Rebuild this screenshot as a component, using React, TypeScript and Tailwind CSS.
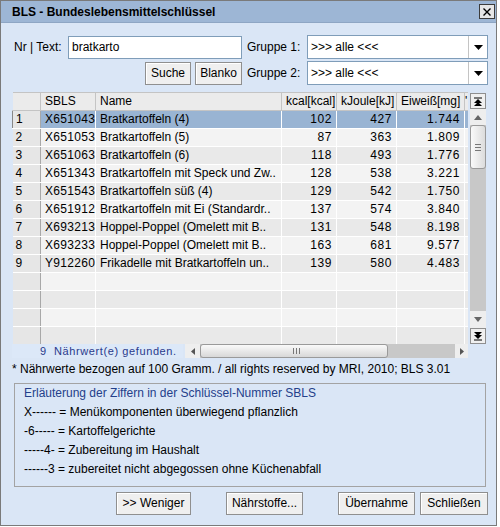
import React from "react";

type Row = {
  nr: number;
  sbls: string;
  name: string;
  kcal: string;
  kj: string;
  eiweiss: string;
};

const rows: Row[] = [
  { nr: 1, sbls: "X651043", name: "Bratkartoffeln (4)", kcal: "102", kj: "427", eiweiss: "1.744" },
  { nr: 2, sbls: "X651053", name: "Bratkartoffeln (5)", kcal: "87", kj: "363", eiweiss: "1.809" },
  { nr: 3, sbls: "X651063", name: "Bratkartoffeln (6)", kcal: "118", kj: "493", eiweiss: "1.776" },
  { nr: 4, sbls: "X651343", name: "Bratkartoffeln mit Speck und Zw..", kcal: "128", kj: "538", eiweiss: "3.221" },
  { nr: 5, sbls: "X651543", name: "Bratkartoffeln süß (4)", kcal: "129", kj: "542", eiweiss: "1.750" },
  { nr: 6, sbls: "X651912", name: "Bratkartoffeln mit Ei (Standardr..", kcal: "137", kj: "574", eiweiss: "3.840" },
  { nr: 7, sbls: "X693213", name: "Hoppel-Poppel (Omelett mit B..", kcal: "131", kj: "548", eiweiss: "8.198" },
  { nr: 8, sbls: "X693233", name: "Hoppel-Poppel (Omelett mit B..", kcal: "163", kj: "681", eiweiss: "9.577" },
  { nr: 9, sbls: "Y912260", name: "Frikadelle mit Bratkartoffeln un..", kcal: "139", kj: "580", eiweiss: "4.483" },
];

const legend = [
  "X------ = Menükomponenten überwiegend pflanzlich",
  "-6----- = Kartoffelgerichte",
  "-----4- = Zubereitung im Haushalt",
  "------3 = zubereitet nicht abgegossen ohne Küchenabfall",
];

function Button({ label, className }: { label: string; className: string }) {
  return (
    <button
      className={`h-[23px] border border-[#8f8f8f] bg-[#efefef] text-[12px] leading-[21px] text-black shadow-[inset_1px_1px_0_#ffffff] ${className}`}
    >
      {label}
    </button>
  );
}

function Combo() {
  return (
    <div className="flex h-[24px] w-[181px] border border-[#7f9db9] bg-white">
      <div className="flex-1 pl-[3px] text-[12px] leading-[22px]">&gt;&gt;&gt; alle &lt;&lt;&lt;</div>
      <div className="flex w-[19px] items-center justify-center border-l border-[#c4c4c4] bg-white">
        <svg width="9" height="5" viewBox="0 0 9 5">
          <path d="M0 0h9L4.5 5z" fill="#000" />
        </svg>
      </div>
    </div>
  );
}

function Arrow({ dir, dbl }: { dir: "up" | "down" | "left" | "right"; dbl?: boolean }) {
  if (dir === "left")
    return (
      <svg width="4" height="7" viewBox="0 0 4 7">
        <path d="M4 0v7L0 3.5z" fill="#555" />
      </svg>
    );
  if (dir === "right")
    return (
      <svg width="4" height="7" viewBox="0 0 4 7">
        <path d="M0 0v7l4-3.5z" fill="#555" />
      </svg>
    );
  const up = dir === "up";
  return (
    <svg width="8" height={dbl ? 9 : 5} viewBox={dbl ? "0 0 8 9" : "0 0 8 5"}>
      {dbl ? (
        up ? (
          <>
            <path d="M0 1h8" stroke="#000" strokeWidth="1" />
            <path d="M4 2L8 6H0z" fill="#000" />
            <path d="M4 5L8 9H0z" fill="#000" />
          </>
        ) : (
          <>
            <path d="M0 8h8" stroke="#000" strokeWidth="1" />
            <path d="M0 0h8L4 4z" fill="#000" />
            <path d="M0 3h8L4 7z" fill="#000" />
          </>
        )
      ) : up ? (
        <path d="M4 0L8 5H0z" fill="#666" />
      ) : (
        <path d="M0 0h8L4 5z" fill="#666" />
      )}
    </svg>
  );
}

function VScroll() {
  return (
    <div className="ml-[2px] mt-[1px] flex h-[251px] w-[16px] flex-col bg-[#c8c8c8]">
      <div className="flex h-[16px] items-center justify-center border border-[#8f8f8f] bg-[#f0f0f0]">
        <Arrow dir="up" dbl />
      </div>
      <div className="flex h-[16px] items-center justify-center bg-[#eeeeee]">
        <Arrow dir="up" />
      </div>
      <div className="flex h-[44px] flex-col items-center justify-center gap-[2px] rounded-[3px] border border-[#9a9a9a] bg-gradient-to-r from-[#fafafa] to-[#dcdcdc]">
        <div className="h-px w-[6px] bg-[#777]" />
        <div className="h-px w-[6px] bg-[#777]" />
        <div className="h-px w-[6px] bg-[#777]" />
      </div>
      <div className="flex-1" />
      <div className="flex h-[17px] items-center justify-center bg-[#eeeeee]">
        <Arrow dir="down" />
      </div>
      <div className="flex h-[16px] items-center justify-center border border-[#8f8f8f] bg-[#f0f0f0]">
        <Arrow dir="down" dbl />
      </div>
    </div>
  );
}

function HScroll() {
  return (
    <div className="ml-[2px] flex h-[14px] w-[283px] bg-[#c8c8c8]">
      <div className="flex w-[15px] items-center justify-center bg-[#eeeeee]">
        <Arrow dir="left" />
      </div>
      <div className="flex w-[188px] items-center justify-center gap-[2px] rounded-[3px] border border-[#9a9a9a] bg-gradient-to-b from-[#fafafa] to-[#d8d8d8] pl-[4px]">
        <div className="h-[6px] w-px bg-[#777]" />
        <div className="h-[6px] w-px bg-[#777]" />
        <div className="h-[6px] w-px bg-[#777]" />
      </div>
      <div className="flex-1" />
      <div className="flex w-[13px] items-center justify-center bg-[#eeeeee]">
        <Arrow dir="right" />
      </div>
    </div>
  );
}

function DataTable() {
  const th = "h-[18px] border-r border-b border-[#c4c4c4] px-[4px] text-left font-normal";
  const td = "h-[18px] border-r border-b border-white px-[4px] whitespace-nowrap overflow-hidden";
  const empty = Array.from({ length: 5 }, (_, i) => i + 10);

  return (
    <div className="h-[252px] w-[456px] overflow-hidden">
      <table className="w-[456px] table-fixed border-collapse text-[12px] leading-[17px]">
        <colgroup>
          <col className="w-[28px]" />
          <col className="w-[55px]" />
          <col className="w-[186px]" />
          <col className="w-[55px]" />
          <col className="w-[60px]" />
          <col className="w-[68px]" />
          <col className="w-[4px]" />
        </colgroup>
        <thead>
          <tr className="bg-[#ebebeb]">
            <th className={`${th} border-t`} />
            <th className={`${th} border-t`}>SBLS</th>
            <th className={`${th} border-t`}>Name</th>
            <th className={`${th} border-t px-[2px]`}>kcal[kcal]</th>
            <th className={`${th} border-t px-[3px]`}>kJoule[kJ]</th>
            <th className={`${th} border-t px-[3px]`}>Eiweiß[mg]</th>
            <th className="h-[18px] border-t border-b border-[#c4c4c4] px-0 text-left font-normal">'</th>
          </tr>
        </thead>
        <tbody>
          {rows.map((r) => {
            const sel = r.nr === 1;
            const bg = sel ? "bg-[#99b4d3]" : r.nr % 2 === 0 ? "bg-[#f3f3f3]" : "bg-[#e9e9e9]";
            return (
              <tr key={r.nr} className={bg}>
                <td className={`${td} border-r-[#a8a8a8] bg-[#e6e6e6] pl-[3px] ${sel ? "border-l border-l-[#888]" : ""}`}>{r.nr}</td>
                <td className={`${td} ${sel ? "border-[#99b4d3]" : ""} tracking-[0.3px]`}>{r.sbls}</td>
                <td className={`${td} ${sel ? "border-[#99b4d3]" : ""}`}>{r.name}</td>
                <td className={`${td} text-right tracking-[0.6px]`}>{r.kcal}</td>
                <td className={`${td} text-right tracking-[0.6px]`}>{r.kj}</td>
                <td className={`${td} text-right tracking-[0.6px]`}>{r.eiweiss}</td>
                <td className="h-[18px] border-b border-white p-0" />
              </tr>
            );
          })}
          {empty.map((n) => (
            <tr key={n} className={n % 2 === 0 ? "bg-[#f3f3f3]" : "bg-[#e9e9e9]"}>
              <td className={`${td} border-r-[#a8a8a8] bg-[#e6e6e6]`} />
              <td className={td} />
              <td className={td} />
              <td className={td} />
              <td className={td} />
              <td className={td} />
              <td className="h-[18px] border-b border-white p-0" />
            </tr>
          ))}
        </tbody>
      </table>
    </div>
  );
}

export default function App() {
  return (
    <div className="h-[527px] w-[500px] bg-white font-['Liberation_Sans',Arial,sans-serif] text-black">
      <div className="flex h-[526px] w-[497px] flex-col border border-[#7a7a7a] bg-[#dae6f6]">
        {/* title bar */}
        <div className="flex h-[22px] shrink-0 items-center justify-between border-b border-[#8ea6c4] bg-[#9db6d5] pl-[11px] pr-[1px]">
          <span className="text-[12px] font-bold">BLS - Bundeslebensmittelschlüssel</span>
          <div className="flex h-[15px] w-[16px] items-center justify-center border border-[#3c3c3c] bg-[#e6e6e6]">
            <svg width="8" height="8" viewBox="0 0 8 8">
              <path d="M0.5 0.5l7 7M7.5 0.5l-7 7" stroke="#000" strokeWidth="1.4" />
            </svg>
          </div>
        </div>

        <div className="flex flex-col pl-[11px] pr-[8px]">
          {/* search row 1 */}
          <div className="mt-[12px] flex items-center">
            <div className="flex w-[230px] items-center">
              <span className="w-[56px] pl-[2px] text-[12px]">Nr | Text:</span>
              <div className="h-[23px] w-[174px] border border-[#7f9db9] bg-white pl-[3px] text-[12px] leading-[21px]">
                bratkarto
              </div>
            </div>
            <span className="ml-[5px] w-[60px] text-[12px]">Gruppe 1:</span>
            <Combo />
          </div>

          {/* search row 2 */}
          <div className="mt-[2px] flex items-center">
            <div className="flex w-[230px] justify-end gap-[4px]">
              <Button label="Suche" className="w-[46px]" />
              <Button label="Blanko" className="w-[47px]" />
            </div>
            <span className="ml-[5px] w-[60px] text-[12px]">Gruppe 2:</span>
            <Combo />
          </div>

          {/* table */}
          <div className="mt-[7px] flex">
            <DataTable />
            <VScroll />
          </div>

          {/* status + horizontal scroll */}
          <div className="flex h-[14px]">
            <div className="w-[171px] bg-[#dce8f8] pl-[28px] text-[11px] leading-[14px] tracking-[0.6px] text-[#2a3a8c]">
              9&nbsp; Nährwert(e) gefunden.
            </div>
            <HScroll />
          </div>

          <div className="mt-[3px] text-[12px] leading-[16px]">
            * Nährwerte bezogen auf 100 Gramm. / all rights reserved by MRI, 2010; BLS 3.01
          </div>

          {/* legend box */}
          <div className="ml-[2px] mt-[6px] flex h-[104px] w-[472px] flex-col border border-[#a3a3a3] pl-[9px] pt-[1px]">
            <span className="text-[12px] leading-[16px] text-[#24408a]">
              Erläuterung der Ziffern in der Schlüssel-Nummer SBLS
            </span>
            <div className="mt-[3px] flex flex-col gap-[3px]">
              {legend.map((l) => (
                <span key={l} className="text-[12px] leading-[16px]">
                  {l}
                </span>
              ))}
            </div>
          </div>

          {/* buttons */}
          <div className="mt-[5px] flex">
            <Button label=">> Weniger" className="ml-[104px] w-[75px]" />
            <Button label="Nährstoffe..." className="ml-[35px] w-[77px]" />
            <Button label="Übernahme" className="ml-[35px] w-[77px]" />
            <Button label="Schließen" className="ml-[5px] w-[68px]" />
          </div>
        </div>
      </div>
    </div>
  );
}
